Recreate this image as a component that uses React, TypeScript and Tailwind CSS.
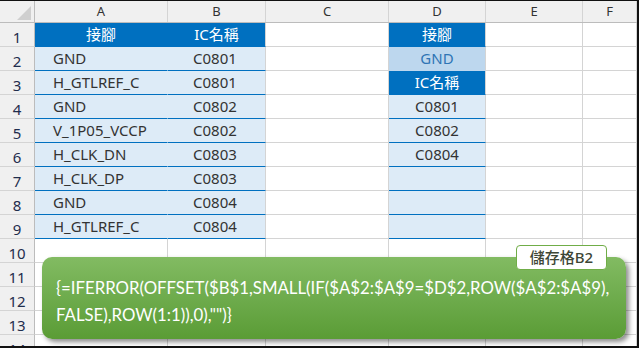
import React from "react";

const COLS = [
  { key: "A", w: "w-[133px]" },
  { key: "B", w: "w-[98px]" },
  { key: "C", w: "w-[123px]" },
  { key: "D", w: "w-[97px]" },
  { key: "E", w: "w-[97px]" },
  { key: "F", w: "flex-1" },
];

const colA = ["接腳", "GND", "H_GTLREF_C", "GND", "V_1P05_VCCP", "H_CLK_DN", "H_CLK_DP", "GND", "H_GTLREF_C"];
const colB = ["IC名稱", "C0801", "C0801", "C0802", "C0802", "C0803", "C0803", "C0804", "C0804"];
const colD = ["接腳", "GND", "IC名稱", "C0801", "C0802", "C0804", "", "", ""];

type Cell = { text?: string; cls: string };

function cellFor(col: string, row: number): Cell {
  const base = "border-r border-b border-r-[#d4d4d4] border-b-[#d4d4d4]";
  if (row <= 9 && (col === "A" || col === "B")) {
    const i = row - 1;
    const text = col === "A" ? colA[i] : colB[i];
    const rc = col === "A" ? "border-r border-r-transparent" : "border-r border-r-[#d4d4d4]";
    if (row === 1) {
      return { text, cls: `${rc} border-b border-b-[#0070c0] bg-[#0070c0] text-white justify-center` };
    }
    const align = col === "A" ? "pl-[18px]" : "pl-[25px]";
    return { text, cls: `${rc} border-b border-b-[#0070c0] bg-[#ddebf7] text-[#333] ${align}` };
  }
  if (col === "D" && row <= 9) {
    const text = colD[row - 1];
    const rc = "border-r border-r-[#d4d4d4]";
    if (row === 1 || row === 3) {
      return { text, cls: `${rc} border-b border-b-[#0070c0] bg-[#0070c0] text-white justify-center` };
    }
    if (row === 2) {
      return { text, cls: `${rc} border-b border-b-[#bdd7ee] bg-[#bdd7ee] text-[#2f75b5] justify-center` };
    }
    return { text, cls: `${rc} border-b border-b-[#0070c0] bg-[#ddebf7] text-[#333] justify-center` };
  }
  return { cls: base };
}

export default function App() {
  const rows = Array.from({ length: 14 }, (_, i) => i + 1);
  return (
    <div
      className="relative h-[348px] w-[639px] overflow-hidden border-t border-r-2 border-b-2 border-[#111] bg-white"
      style={{ fontFamily: '"Noto Sans", "Noto Sans CJK TC", sans-serif' }}
    >
      {/* column header */}
      <div className="flex h-[22px] border-b border-[#bcbcbc] bg-[#f0f0f0] text-[13px] text-[#333]">
        <div className="relative w-[35px] border-r border-[#bcbcbc]">
          <svg className="absolute left-[17px] top-[5px]" width="14" height="14" viewBox="0 0 14 14">
            <polygon points="14,0 14,14 0,14" fill="#cfcfcf" />
          </svg>
        </div>
        {COLS.map((c) => (
          <div key={c.key} className={`${c.w} flex items-center justify-center border-r border-[#d4d4d4] pt-[1px]`}>
            {c.key}
          </div>
        ))}
      </div>

      {rows.map((r) => (
        <div key={r} className="flex h-[24px] text-[15px]">
          <div className="flex w-[35px] items-center justify-center border-r border-b border-r-[#bcbcbc] border-b-[#d4d4d4] bg-[#f0f0f0] pt-[6px] text-[#1f2d4d]">
            {r}
          </div>
          {COLS.map((c) => {
            const cell = cellFor(c.key, r);
            return (
              <div key={c.key} className={`${c.w} flex items-center ${cell.cls}`}>
                {cell.text}
              </div>
            );
          })}
        </div>
      ))}

      {/* formula callout */}
      <div className="absolute left-[42px] top-[256px] h-[82px] w-[584px] rounded-[10px] bg-linear-to-b from-[#82bb62] to-[#5a9c35] pl-[14px] pt-[17px] text-[16.8px] leading-[27px] text-white shadow-[3px_3px_5px_rgba(0,0,0,0.45)]"
        style={{ fontFamily: "Lato, sans-serif" }}
      >
        <div>{"{=IFERROR(OFFSET($B$1,SMALL(IF($A$2:$A$9=$D$2,ROW($A$2:$A$9),"}</div>
        <div>{'FALSE),ROW(1:1)),0),"")}'}</div>
      </div>
      <div className="absolute left-[516px] top-[244px] flex h-[25px] w-[91px] items-center justify-center rounded-[4px] border border-[#70ad47] bg-white text-[15px] font-medium text-[#3d4636]">
        儲存格B2
      </div>
    </div>
  );
}
